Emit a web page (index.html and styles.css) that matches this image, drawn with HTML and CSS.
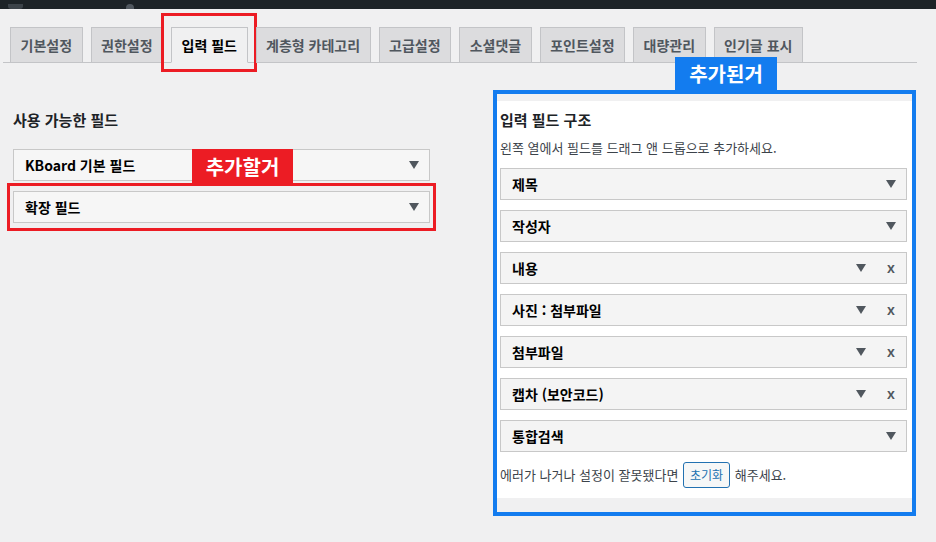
FILE: index.html
```html
<!DOCTYPE html>
<html lang="ko">
<head>
<meta charset="utf-8">
<title>KBoard 입력 필드</title>
<link rel="stylesheet" href="styles.css">
</head>
<body>
<div class="adminbar">
  <span class="ab-logo"></span>
  <span class="ab-home"></span>
</div>
<div class="wrap">
  <nav class="tabs">
    <a class="tab">기본설정</a>
    <a class="tab">권한설정</a>
    <a class="tab tab-active">입력 필드<span class="mark-tab"></span></a>
    <a class="tab">계층형 카테고리</a>
    <a class="tab">고급설정</a>
    <a class="tab">소셜댓글</a>
    <a class="tab">포인트설정</a>
    <a class="tab">대량관리</a>
    <a class="tab">인기글 표시</a>
  </nav>
  <div class="columns">
    <div class="col-left">
      <h3 class="col-title">사용 가능한 필드</h3>
      <div class="field field-left"><span class="field-name">KBoard 기본 필드</span><span class="arrow"></span></div>
      <div class="mark-red">
        <div class="field field-left"><span class="field-name">확장 필드</span><span class="arrow"></span></div>
      </div>
      <span class="tag tag-red">추가할거</span>
    </div>
    <div class="col-right">
      <span class="tag tag-blue">추가된거</span>
      <div class="panel">
        <h3 class="panel-title">입력 필드 구조</h3>
        <p class="desc">왼쪽 열에서 필드를 드래그 앤 드롭으로 추가하세요.</p>
        <div class="field-stack">
          <div class="field"><span class="field-name">제목</span><span class="arrow"></span></div>
          <div class="field"><span class="field-name">작성자</span><span class="arrow"></span></div>
          <div class="field"><span class="field-name">내용</span><span class="arrow"></span><span class="remove">x</span></div>
          <div class="field"><span class="field-name">사진 : 첨부파일</span><span class="arrow"></span><span class="remove">x</span></div>
          <div class="field"><span class="field-name">첨부파일</span><span class="arrow"></span><span class="remove">x</span></div>
          <div class="field"><span class="field-name">캡차 (보안코드)</span><span class="arrow"></span><span class="remove">x</span></div>
          <div class="field"><span class="field-name">통합검색</span><span class="arrow"></span></div>
        </div>
        <p class="reset">에러가 나거나 설정이 잘못됐다면 <button class="btn">초기화</button> 해주세요.</p>
      </div>
    </div>
  </div>
</div>
</body>
</html>
```
FILE: styles.css
```css
* { box-sizing: border-box; }
html, body { margin: 0; padding: 0; }
body {
  background: #f0f0f1;
  font-family: "Noto Sans CJK KR", "Noto Sans", sans-serif;
  color: #1d2327;
  width: 936px;
  height: 542px;
  overflow: hidden;
}
.adminbar {
  height: 9px;
  background: #1d2327;
  position: relative;
}
.ab-logo {
  position: absolute;
  left: 8px; top: 4px;
  width: 15px; height: 5px;
  background: #3c4349;
  border-radius: 0 0 3px 3px;
}
.ab-home {
  position: absolute;
  left: 126px; top: 4px;
  width: 8px; height: 5px;
  background: #50575e;
  border-radius: 4px 4px 0 0;
}
.wrap {
  margin-left: 3px;
  width: 914px;
  padding-top: 18px;
}
.tabs {
  display: flex;
  gap: 8px;
  padding-left: 7px;
  border-bottom: 1px solid #c3c4c7;
  height: 36px;
}
.tab {
  position: relative;
  display: block;
  height: 36px;
  padding: 5px 9.5px;
  font-size: 14px;
  line-height: 24px;
  font-weight: 700;
  color: #50575e;
  background: #dcdcde;
  border: 1px solid #c3c4c7;
  white-space: nowrap;
}
.tab-active {
  background: #f0f0f1;
  color: #000;
  border-bottom-color: #f0f0f1;
}
.mark-tab {
  position: absolute;
  left: -11px;
  top: -15px;
  width: 96px;
  height: 59px;
  border: 3px solid #ec1c24;
}
.columns {
  display: flex;
  gap: 63px;
  padding-left: 10px;
  align-items: flex-start;
}
.col-left {
  position: relative;
  width: 417px;
  margin-top: 46px;
}
.col-title {
  margin: 0 0 19px;
  font-size: 15px;
  line-height: 21px;
  font-weight: 700;
  color: #1d2327;
}
.field {
  display: flex;
  align-items: center;
  height: 32px;
  padding: 0 10px 0 11px;
  background: #f4f4f4;
  border: 1px solid #c8c8c8;
}
.field-left { background: #f6f6f6; }
.field-name {
  flex: 1;
  font-size: 14px;
  font-weight: 700;
  color: #000;
  white-space: nowrap;
}
.arrow {
  width: 0; height: 0;
  border-left: 5px solid transparent;
  border-right: 5px solid transparent;
  border-top: 8px solid #50575e;
}
.remove {
  margin-left: 21px;
  width: 9px;
  font-size: 14px;
  line-height: 14px;
  font-weight: 600;
  color: #50575e;
  font-family: "Noto Sans", sans-serif;
}
.mark-red {
  margin: 2px -6px 0;
  padding: 5px 3px;
  border: 3px solid #ec1c24;
}
.tag {
  position: absolute;
  display: flex;
  align-items: center;
  justify-content: center;
  color: #fff;
  font-size: 20px;
  font-weight: 700;
  white-space: nowrap;
}
.tag-red {
  left: 179px;
  top: 40px;
  width: 101px;
  height: 34px;
  background: #ec1c24;
}
.tag-blue {
  left: 178px;
  top: -37px;
  width: 102px;
  height: 33px;
  background: #137cef;
}
.col-right {
  position: relative;
  width: 423px;
  margin-top: 27px;
  border: 4px solid #137cef;
  padding: 7px 0 14px;
}
.panel {
  background: #fff;
  padding: 8px 5px 10px 3px;
}
.panel-title {
  margin: 0 0 9px;
  font-size: 15px;
  line-height: 21px;
  font-weight: 700;
  color: #1d2327;
}
.desc {
  margin: 0 0 11px;
  font-size: 13px;
  line-height: 18px;
  color: #3c434a;
}
.field-stack {
  display: flex;
  flex-direction: column;
  gap: 10px;
}
.reset {
  margin: 10px 0 0;
  font-size: 13px;
  line-height: 26px;
  color: #3c434a;
}
.btn {
  height: 26px;
  padding: 0 6px;
  margin: 0 1px;
  font-family: inherit;
  font-size: 12px;
  line-height: 24px;
  color: #2271b1;
  background: #f6f7f7;
  border: 1px solid #2271b1;
  border-radius: 3px;
  vertical-align: top;
}
```
